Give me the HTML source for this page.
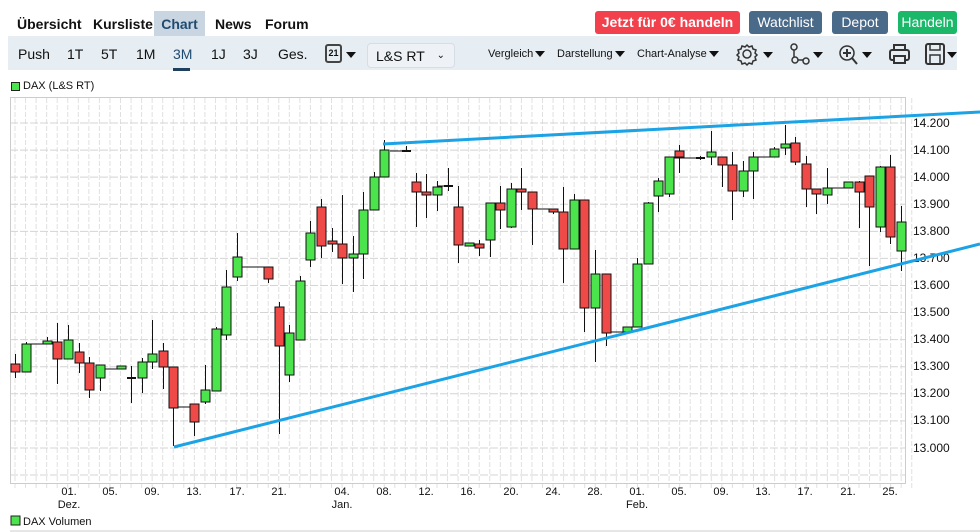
<!DOCTYPE html>
<html><head><meta charset="utf-8">
<style>
*{margin:0;padding:0;box-sizing:border-box}
body{width:980px;height:532px;background:#fff;font-family:"Liberation Sans",sans-serif;position:relative;overflow:hidden;color:#111}
.tab{position:absolute;top:11px;height:25px;line-height:26px;font-weight:bold;font-size:14px;padding:0 6px}
.btn{position:absolute;top:11px;height:23px;line-height:23px;color:#fff;font-size:14px;text-align:center;border-radius:3px}
.tb{position:absolute;top:36px;left:8px;width:949px;height:34px;background:#e6edf3}
.t{position:absolute;top:46px;font-size:14px}
.s{position:absolute;top:48px;font-size:11px}
.tri{display:inline-block;width:0;height:0;border-left:5px solid transparent;border-right:5px solid transparent;border-top:6px solid #111;vertical-align:middle;margin-left:2px}
</style></head><body>
<div class="tab" style="left:11px">Übersicht</div>
<div class="tab" style="left:87px">Kursliste</div>
<div class="tab" style="left:154px;width:51px;background:#c9d6e2;color:#1e4a70;text-align:center;padding:0">Chart</div>
<div class="tab" style="left:209px">News</div>
<div class="tab" style="left:259px">Forum</div>
<div class="btn" style="left:595px;width:145px;background:#f2404c;font-weight:bold">Jetzt für 0€ handeln</div>
<div class="btn" style="left:749px;width:73px;background:#4a6a8a">Watchlist</div>
<div class="btn" style="left:832px;width:56px;background:#4a6a8a">Depot</div>
<div class="btn" style="left:898px;width:59px;background:#1bb86a">Handeln</div>
<div class="tb"></div>
<div class="t" style="left:18px">Push</div>
<div class="t" style="left:67px">1T</div>
<div class="t" style="left:101px">5T</div>
<div class="t" style="left:136px">1M</div>
<div class="t" style="left:173px;color:#1e4a70">3M</div>
<div style="position:absolute;left:173px;top:68px;width:17px;height:3px;background:#1e3f5e"></div>
<div class="t" style="left:211px">1J</div>
<div class="t" style="left:243px">3J</div>
<div class="t" style="left:278px">Ges.</div>
<div style="position:absolute;left:325px;top:44px;width:17px;height:19px;border:2px solid #444;border-radius:3px;font-size:9px;font-weight:bold;text-align:center;line-height:15px">21</div>
<span class="tri" style="position:absolute;left:344px;top:52px"></span>
<div style="position:absolute;left:367px;top:43px;width:88px;height:25px;border:1px solid #d6dde4;border-radius:4px;background:#eef2f6;font-size:14px;line-height:24px;padding-left:8px">L&amp;S RT<span style="position:absolute;right:9px;top:0;font-size:10px">&#8964;</span></div>
<div class="s" style="left:488px">Vergleich<span class="tri"></span></div>
<div class="s" style="left:557px">Darstellung<span class="tri"></span></div>
<div class="s" style="left:637px">Chart-Analyse<span class="tri"></span></div>
<svg style="position:absolute;left:730px;top:40px" width="240" height="28" fill="none" stroke="#333" stroke-width="1.5">
<circle cx="17" cy="14" r="4"/><path d="M17 5l2 2 3-1 1 3 3 1-1 3 2 2-2 2 1 3-3 1-1 3-3-1-2 2-2-2-3 1-1-3-3-1 1-3-2-2 2-2-1-3 3-1 1-3 3 1z"/>
<path d="M33 12h10l-5 6z" fill="#111" stroke="none"/>
<circle cx="64" cy="7" r="3"/><circle cx="65" cy="20" r="3"/><circle cx="76" cy="21" r="3"/><path d="M64 10v7M68 20h5"/>
<path d="M83 12h10l-5 6z" fill="#111" stroke="none"/>
<circle cx="117" cy="13" r="7"/><path d="M117 9v8M113 13h8M122 18l5 6" stroke-width="2"/>
<path d="M132 12h10l-5 6z" fill="#111" stroke="none"/>
<rect x="160" y="10" width="19" height="10" rx="2" stroke-width="2"/><rect x="164" y="5" width="11" height="5" stroke-width="2"/><rect x="164" y="16" width="11" height="7" fill="#e6edf3" stroke-width="2"/>
<rect x="196" y="4" width="18" height="20" rx="2" stroke-width="2"/><rect x="200" y="4" width="10" height="6"/><rect x="200" y="15" width="10" height="9"/>
<path d="M217 12h10l-5 6z" fill="#111" stroke="none"/>
</svg>
<div style="position:absolute;left:11px;top:82px;width:9px;height:9px;background:#4ce44c;border:1px solid #222"></div>
<div style="position:absolute;left:23px;top:80px;font-size:11px">DAX (L&amp;S RT)</div>
<svg id="ch" style="position:absolute;left:0;top:0" width="980" height="532" font-family="Liberation Sans,sans-serif" font-size="12">
<g id="grid"></g>
<rect x="10.5" y="97.5" width="895" height="386" fill="none" stroke="#ccc"/>
<g fill="#111">
<text x="913" y="127">14.200</text><text x="913" y="154">14.100</text><text x="913" y="181">14.000</text><text x="913" y="208">13.900</text><text x="913" y="235">13.800</text><text x="913" y="262">13.700</text><text x="913" y="289">13.600</text><text x="913" y="316">13.500</text><text x="913" y="343">13.400</text><text x="913" y="370">13.300</text><text x="913" y="397">13.200</text><text x="913" y="424">13.100</text><text x="913" y="452">13.000</text>
</g>
<g fill="#111" text-anchor="middle" font-size="11">
<text x="69" y="495">01.</text><text x="110" y="495">05.</text><text x="152" y="495">09.</text><text x="194" y="495">13.</text><text x="237" y="495">17.</text><text x="279" y="495">21.</text><text x="342" y="495">04.</text><text x="384" y="495">08.</text><text x="426" y="495">12.</text><text x="468" y="495">16.</text><text x="511" y="495">20.</text><text x="553" y="495">24.</text><text x="595" y="495">28.</text><text x="637" y="495">01.</text><text x="679" y="495">05.</text><text x="721" y="495">09.</text><text x="763" y="495">13.</text><text x="805" y="495">17.</text><text x="848" y="495">21.</text><text x="890" y="495">25.</text>
<text x="69" y="508">Dez.</text><text x="342" y="508">Jan.</text><text x="637" y="508">Feb.</text>
</g>
<g id="cs" stroke="#111" stroke-width="1"></g>
<path d="M383 144L980 112M174 447L980 244" stroke="#1ba3e6" stroke-width="3"/>
<rect x="11" y="516" width="9" height="9" fill="#4ce44c" stroke="#222"/>
<text x="23" y="525" font-size="11" fill="#111">DAX Volumen</text>
<line x1="10" y1="531" x2="980" y2="531" stroke="#ccc"/>
</svg>
<script>
var g=document.getElementById('grid'),h='';
for(var k=0;k<=85;k++){var x=15+k*10.55;h+='<line x1="'+x+'" y1="98" x2="'+x+'" y2="488" stroke="#e0e0e0" stroke-dasharray="5,2"/>';}
for(var k=0;k<=13;k++){var y=123+k*27.08;h+='<line x1="10" y1="'+y+'" x2="906" y2="'+y+'" stroke="#d4d4d4" stroke-dasharray="8,2"/>';}
g.innerHTML=h;
var d=[[15,364,372,354,378,'r'],[26,344,372,342,372,'g'],[47,341,344,337,344,'g'],[57,342,359,323,384,'r'],[68,340,359,325,359,'g'],[79,352,363,343,373,'r'],[89,363,390,357,398,'r'],[100,365,378,365,391,'g'],[121,366,369,366,369,'g'],[131,378,378,366,403,'d'],[142,362,378,358,393,'g'],[152,354,362,320,369,'g'],[163,351,367,343,389,'r'],[173,367,408,367,446,'r'],[194,404,422,404,436,'r'],[205,390,402,365,404,'g'],[216,329,391,327,391,'g'],[226,287,335,270,340,'g'],[237,257,277,233,281,'g'],[268,267,279,267,283,'r'],[279,307,346,302,434,'r'],[289,333,375,325,382,'g'],[300,281,340,276,340,'g'],[310,233,260,221,267,'g'],[321,207,246,199,258,'r'],[332,241,244,228,252,'r'],[342,244,258,195,284,'r'],[353,254,258,236,292,'g'],[363,210,254,192,279,'g'],[374,177,210,172,210,'g'],[384,150,177,140,177,'g'],[406,151,151,146,152,'d'],[416,182,192,173,227,'r'],[426,192,195,174,218,'r'],[437,187,195,181,211,'g'],[448,186,186,168,191,'d'],[458,207,245,186,263,'r'],[469,243,246,243,246,'g'],[479,244,248,240,256,'r'],[490,203,240,203,257,'g'],[500,203,210,186,229,'r'],[511,189,227,183,228,'g'],[521,189,192,168,210,'r'],[532,192,209,192,245,'r'],[553,209,212,209,214,'r'],[563,212,249,187,283,'r'],[574,200,249,194,249,'g'],[584,200,308,200,332,'r'],[595,274,308,250,362,'g'],[606,274,333,274,346,'r'],[627,327,332,327,332,'g'],[637,264,327,258,327,'g'],[648,203,264,202,264,'g'],[658,181,196,178,212,'g'],[669,157,194,157,197,'g'],[679,151,157,145,173,'r'],[700,158,158,156,160,'d'],[711,152,157,131,165,'g'],[722,157,165,157,187,'r'],[732,165,191,152,220,'r'],[743,171,191,161,197,'g'],[753,157,171,152,199,'g'],[774,149,157,147,157,'g'],[785,144,148,125,155,'g'],[795,143,162,137,165,'r'],[806,164,189,156,207,'r'],[816,189,194,189,214,'r'],[827,188,195,168,204,'g'],[848,182,188,182,188,'g'],[859,182,192,181,228,'r'],[869,176,207,176,266,'r'],[880,167,227,166,232,'g'],[890,167,237,155,244,'r'],[901,222,251,206,271,'g']];
var L=[[26,47,344],[100,121,369],[173,194,407],[237,268,267],[390,410,151],[437,448,186],[532,553,209],[606,627,332],[669,700,158],[753,774,157],[827,848,188]];
var s='';
L.forEach(function(l){s+='<line x1="'+l[0]+'" y1="'+l[2]+'" x2="'+l[1]+'" y2="'+l[2]+'"/>';});
d.forEach(function(c){var x=c[0]+0.5;s+='<line x1="'+x+'" y1="'+c[3]+'" x2="'+x+'" y2="'+c[4]+'"/>';
if(c[5]=='d'){s+='<line x1="'+(c[0]-4)+'" y1="'+c[1]+'" x2="'+(c[0]+5)+'" y2="'+c[1]+'" stroke-width="2"/>';}
else s+='<rect x="'+(c[0]-4)+'" y="'+c[1]+'" width="9" height="'+Math.max(2,c[2]-c[1])+'" fill="'+(c[5]=='g'?'#4ce44c':'#f04a48')+'"/>';});
document.getElementById('cs').innerHTML=s;
</script>
</body></html>
